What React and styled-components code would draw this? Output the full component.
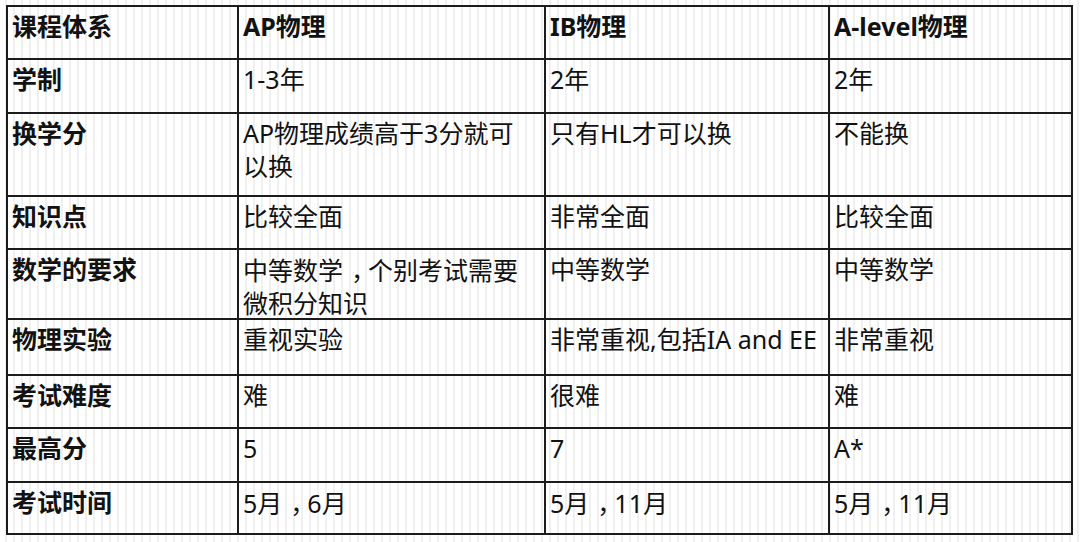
import React from "react";
import styled, { createGlobalStyle } from "styled-components";

const Global = createGlobalStyle`
  html, body {
    margin: 0;
    padding: 0;
    background: #ffffff;
  }
  body {
    font-family: "Noto Sans", "Noto Sans CJK SC", sans-serif;
  }
`;

const Page = styled.div`
  width: 1080px;
  height: 542px;
  box-sizing: border-box;
  padding: 5px 0 0 6px;
  background-color: #ffffff;
  background-image: repeating-linear-gradient(
    90deg,
    #ffffff 0px,
    #ffffff 5px,
    #f0f0f0 5px,
    #f0f0f0 7px,
    #ffffff 7px,
    #ffffff 8px
  );
  overflow: hidden;
`;

const Grid = styled.div`
  display: grid;
  width: 1067px;
  box-sizing: border-box;
  grid-template-columns: 231px 307px 284px 243px;
  grid-template-rows: ${(p) => p.$rows.map((r) => `${r}px`).join(" ")};
  border-left: 2px solid #1c1c1c;
  border-top: 2px solid #1c1c1c;
`;

const Cell = styled.div`
  box-sizing: border-box;
  border-right: 2px solid #1c1c1c;
  border-bottom: 2px solid #1c1c1c;
  padding: 3px 4px 0 4px;
  font-family: "Noto Sans", "Noto Sans CJK SC", sans-serif;
  font-size: 25px;
  line-height: 33px;
  color: #121212;
  font-weight: ${(p) => (p.$bold ? 700 : 400)};
  white-space: nowrap;
  overflow: hidden;
`;

const Comma = styled.span`
  font-family: "Noto Sans CJK SC", sans-serif;
  padding-left: 0.32em;
  letter-spacing: -0.32em;
`;

const rows = [
  { h: 53, cells: ["课程体系", "AP物理", "IB物理", "A-level物理"], header: true },
  { h: 54, cells: ["学制", "1-3年", "2年", "2年"] },
  { h: 83, cells: ["换学分", ["AP物理成绩高于3分就可", "以换"], "只有HL才可以换", "不能换"] },
  { h: 53, cells: ["知识点", "比较全面", "非常全面", "比较全面"] },
  { h: 70, cells: ["数学的要求", ["中等数学，个别考试需要", "微积分知识"], "中等数学", "中等数学"] },
  { h: 56, cells: ["物理实验", "重视实验", "非常重视,包括IA and EE", "非常重视"] },
  { h: 53, cells: ["考试难度", "难", "很难", "难"] },
  { h: 54, cells: ["最高分", "5", "7", "A*"] },
  { h: 52, cells: ["考试时间", "5月，6月", "5月，11月", "5月，11月"] },
];

const renderLine = (line) => {
  const parts = line.split("，");
  return parts.map((p, i) => (
    <React.Fragment key={i}>
      {i > 0 && <Comma>，</Comma>}
      {p}
    </React.Fragment>
  ));
};

const renderText = (c) =>
  (Array.isArray(c) ? c : [c]).map((line, i) => (
    <React.Fragment key={i}>
      {i > 0 && <br />}
      {renderLine(line)}
    </React.Fragment>
  ));

export default function App() {
  return (
    <>
      <Global />
      <Page>
        <Grid $rows={rows.map((r) => r.h)}>
          {rows.map((r, ri) =>
            r.cells.map((c, ci) => (
              <Cell key={`${ri}-${ci}`} $bold={r.header || ci === 0}>
                {renderText(c)}
              </Cell>
            ))
          )}
        </Grid>
      </Page>
    </>
  );
}
